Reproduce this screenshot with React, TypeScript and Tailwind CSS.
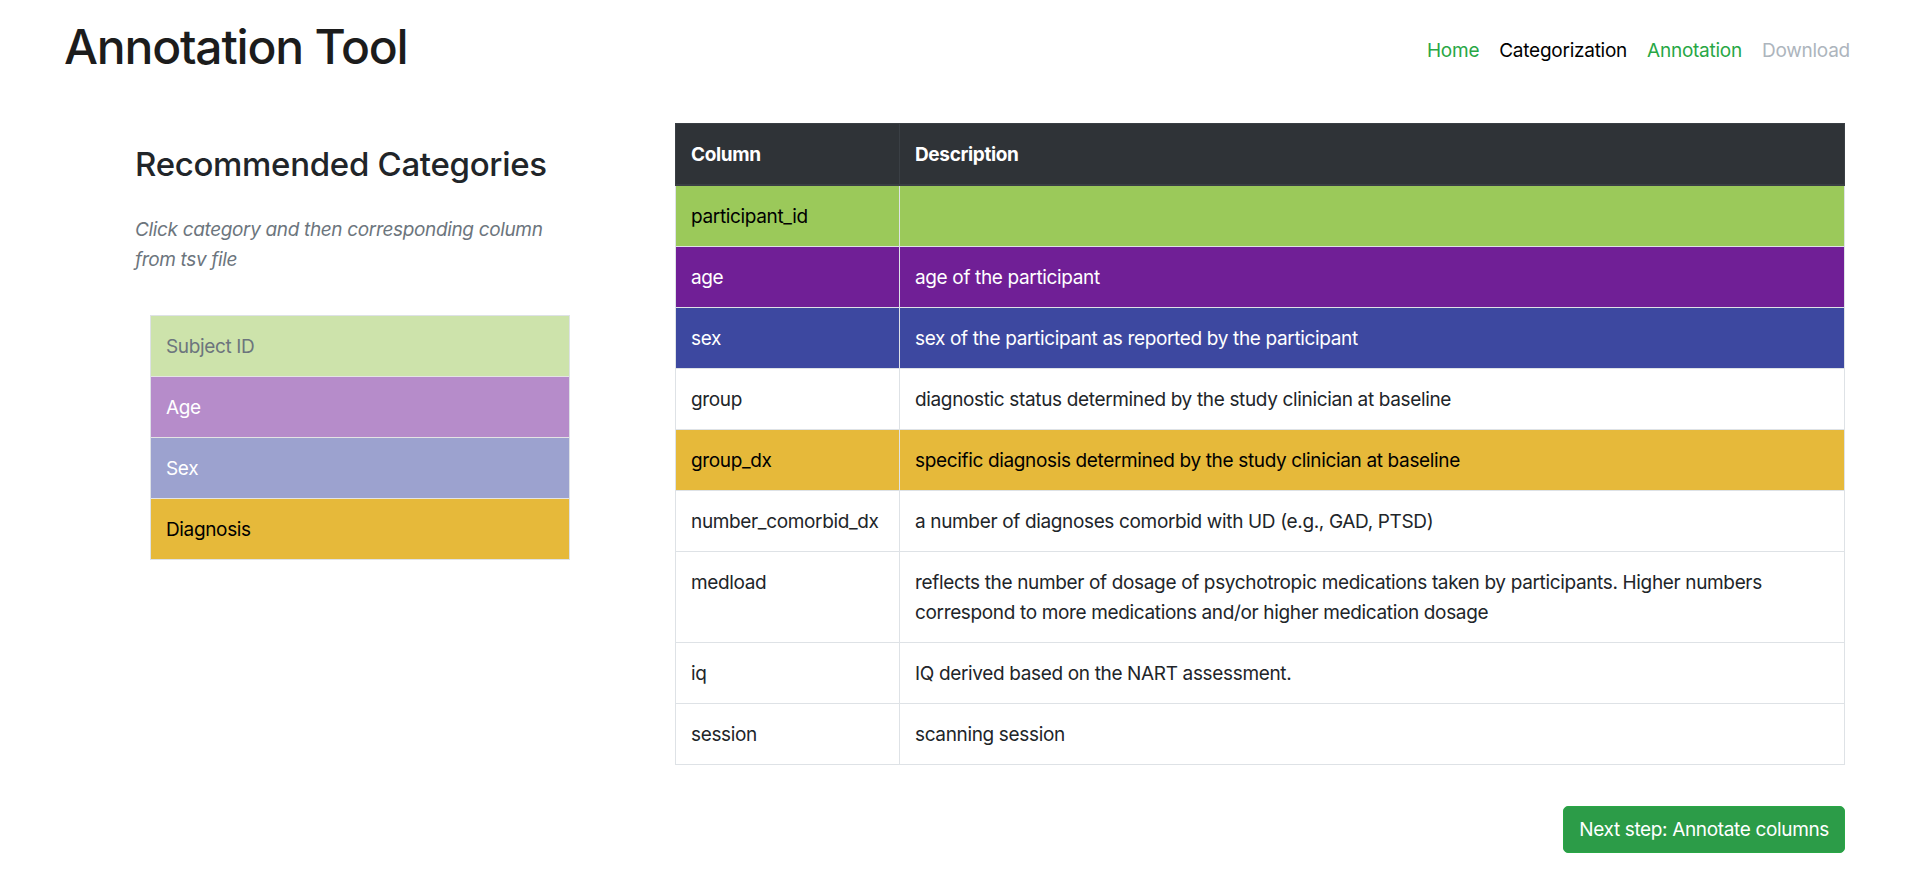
const CATEGORIES = [
  { name: "Subject ID", cls: "bg-[#cde3ab] text-[#6c757d]" },
  { name: "Age", cls: "bg-[#b68cca] text-white" },
  { name: "Sex", cls: "bg-[#9ca2cf] text-white" },
  { name: "Diagnosis", cls: "bg-[#e6b93a] text-black" },
];

const ROWS = [
  { col: "participant_id", desc: "", cls: "bg-[#9bc95a] text-black" },
  { col: "age", desc: "age of the participant", cls: "bg-[#701f96] text-white" },
  { col: "sex", desc: "sex of the participant as reported by the participant", cls: "bg-[#3d48a0] text-white" },
  { col: "group", desc: "diagnostic status determined by the study clinician at baseline", cls: "bg-white text-[#212529]" },
  { col: "group_dx", desc: "specific diagnosis determined by the study clinician at baseline", cls: "bg-[#e6b93a] text-black" },
  { col: "number_comorbid_dx", desc: "a number of diagnoses comorbid with UD (e.g., GAD, PTSD)", cls: "bg-white text-[#212529]" },
  {
    col: "medload",
    desc: "reflects the number of dosage of psychotropic medications taken by participants. Higher numbers correspond to more medications and/or higher medication dosage",
    cls: "bg-white text-[#212529]",
  },
  { col: "iq", desc: "IQ derived based on the NART assessment.", cls: "bg-white text-[#212529]" },
  { col: "session", desc: "scanning session", cls: "bg-white text-[#212529]" },
];

export default function App() {
  return (
    <div className="min-h-screen bg-white font-['Inter',sans-serif] text-[19px] leading-[30px] tracking-[-0.35px] text-[#212529]">
      {/* Header */}
      <div className="flex items-start justify-between pl-[64px] pr-[60px] pt-[18px]">
        <h1 className="text-[48px] leading-[58px] font-medium text-[#1c1c1c] tracking-[-1.2px]">Annotation Tool</h1>
        <nav className="mt-[18px] flex tracking-[-0.25px]">
          <a className="px-[10px] text-[#28a745]">Home</a>
          <a className="px-[10px] text-black">Categorization</a>
          <a className="px-[10px] text-[#28a745]">Annotation</a>
          <a className="px-[10px] text-[#adb5bd]">Download</a>
        </nav>
      </div>

      <div className="mt-[47px] flex">
        {/* Left column */}
        <div className="ml-[135px] w-[540px] pt-[20px]">
          <h3 className="text-[33px] leading-[42px] font-medium tracking-[-0.3px]">Recommended Categories</h3>
          <p className="mt-[30px] w-[435px] italic text-[#6c757d]">
            Click category and then corresponding column from tsv file
          </p>
          <div className="mt-[40px] ml-[15px] w-[420px] border border-[#dee2e6]">
            {CATEGORIES.map((c, i) => (
              <div
                key={c.name}
                className={`px-[15px] pt-[16px] pb-[14px] ${c.cls} ${i > 0 ? "h-[61px] border-t border-[#e4e4e4]" : "h-[60px]"}`}
              >
                {c.name}
              </div>
            ))}
          </div>
        </div>

        {/* Table */}
        <div className="w-[1170px]">
          <table className="w-full table-fixed border-collapse">
            <thead>
              <tr className="bg-[#2f3337] text-white">
                <th className="w-[224px] border border-[#3a3f44] border-b-2 px-[15px] pt-[16px] pb-[14px] text-left font-bold">Column</th>
                <th className="border border-[#3a3f44] border-b-2 px-[15px] pt-[16px] pb-[14px] text-left font-bold">Description</th>
              </tr>
            </thead>
            <tbody>
              {ROWS.map(r => (
                <tr key={r.col} className={r.cls}>
                  <td className="border border-[#dee2e6] px-[15px] pt-[16px] pb-[14px] align-top">{r.col}</td>
                  <td className="border border-[#dee2e6] px-[15px] pt-[16px] pb-[14px] align-top">{r.desc}</td>
                </tr>
              ))}
            </tbody>
          </table>
          <div className="mt-[41px] flex justify-end">
            <button className="rounded-[5px] border border-[#28a745] bg-[#2c9c48] px-[15px] pt-[8px] pb-[7px] leading-[30px] text-white">
              Next step: Annotate columns
            </button>
          </div>
        </div>
      </div>
    </div>
  );
}
